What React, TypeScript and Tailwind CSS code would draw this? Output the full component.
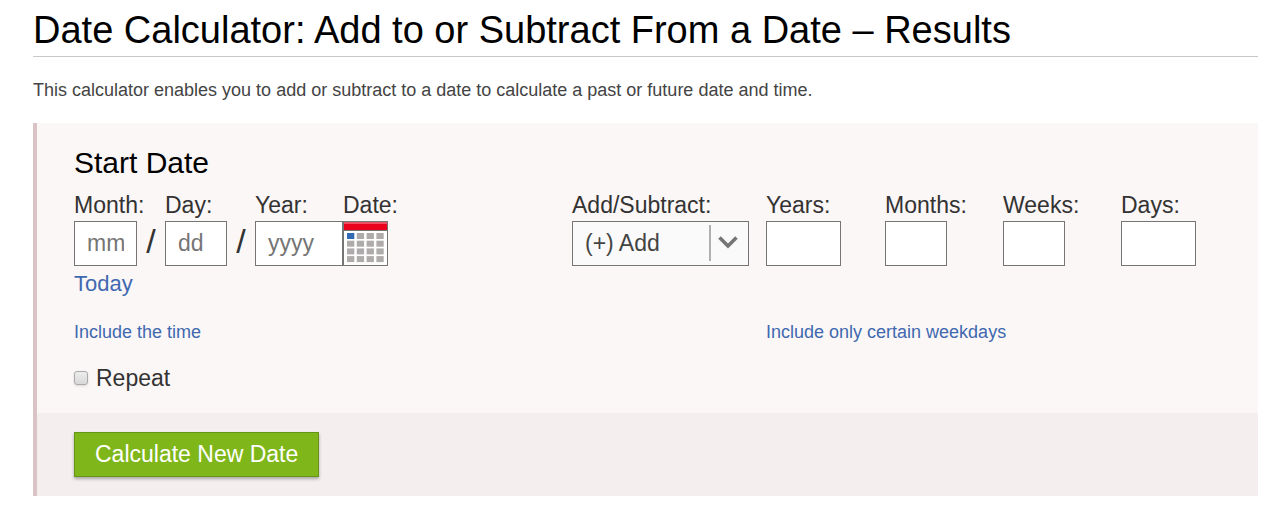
import { useState } from "react";

const fieldClass =
  "h-[45px] border border-[#757575] bg-white px-3 text-[23px] text-[#444] placeholder:text-[#757575] focus:outline-2 focus:outline-[#3a66ad]";
const labelClass = "text-[23px] leading-8 text-[#333]";
const linkClass = "text-[#3f68b0] hover:underline";
const slashClass = "w-7 text-center text-[34px] leading-10 text-[#333]";

const amounts = [
  { id: "years", label: "Years:", width: "w-[75px]" },
  { id: "months", label: "Months:", width: "w-[62px]" },
  { id: "weeks", label: "Weeks:", width: "w-[62px]" },
  { id: "days", label: "Days:", width: "w-[75px]" },
];

function CalendarIcon() {
  const cells = [0, 1, 2, 3];

  return (
    <svg width="43" height="43" viewBox="0 0 43 43" aria-hidden="true">
      <rect width="43" height="43" fill="#fff" />
      <rect width="43" height="8" fill="#e9001d" />
      <rect width="43" height="2" fill="#ea5260" />
      <rect y="8" width="43" height="1" fill="#757575" />
      {cells.map((row) =>
        cells.map((col) => (
          <rect
            key={`${row}-${col}`}
            x={3 + col * 9.8}
            y={11 + row * 7.7}
            width="7.3"
            height="6"
            fill={row === 0 && col === 0 ? "#3369b3" : "#afabab"}
          />
        ))
      )}
    </svg>
  );
}

function DateFields() {
  return (
    <div className="flex">
      <div className="flex flex-col">
        <label htmlFor="month" className={labelClass}>
          Month:
        </label>
        <div className="flex">
          <input id="month" className={`${fieldClass} w-[63px]`} placeholder="mm" />
          <span className={slashClass}>/</span>
        </div>
      </div>
      <div className="flex flex-col">
        <label htmlFor="day" className={labelClass}>
          Day:
        </label>
        <div className="flex">
          <input id="day" className={`${fieldClass} w-[62px]`} placeholder="dd" />
          <span className={slashClass}>/</span>
        </div>
      </div>
      <div className="flex flex-col">
        <label htmlFor="year" className={labelClass}>
          Year:
        </label>
        <input id="year" className={`${fieldClass} w-[88px]`} placeholder="yyyy" />
      </div>
      <div className="flex flex-col">
        <label htmlFor="calendar" className={labelClass}>
          Date:
        </label>
        <button id="calendar" type="button" className="h-[45px] w-[45px] border border-[#757575]">
          <CalendarIcon />
        </button>
      </div>
    </div>
  );
}

function App() {
  const [repeat, setRepeat] = useState(false);

  return (
    <div className="bg-white pt-2 pr-[26px] pl-[33px] font-['Liberation_Sans',Arial,sans-serif]">
      <h1 className="border-b border-[#c8c8c8] pb-1 text-[38px] leading-[44px] text-black">
        Date Calculator: Add to or Subtract From a Date – Results
      </h1>
      <p className="py-5 text-[18px] leading-[26px] text-[#444]">
        This calculator enables you to add or subtract to a date to calculate a past or future date and time.
      </p>
      <form className="border-l-4 border-[#dac3c6] bg-[#fbf7f6]" onSubmit={(e) => e.preventDefault()}>
        <div className="pt-5 pb-[19px] pl-[37px]">
          <h2 className="text-[30px] leading-10 text-black">Start Date</h2>
          <div className="mt-1.5 grid grid-cols-[498fr_194fr_119fr_118fr_118fr_137fr]">
            <div>
              <DateFields />
              <a href="#today" className={`${linkClass} text-[22px] leading-9`}>
                Today
              </a>
            </div>
            <div className="flex flex-col items-start">
              <label htmlFor="operation" className={labelClass}>
                Add/Subtract:
              </label>
              <div className="relative">
                <select
                  id="operation"
                  className="h-[45px] w-[177px] appearance-none border border-[#757575] bg-[#fafafa] px-3 text-[23px] text-[#444]"
                >
                  <option>(+) Add</option>
                  <option>(–) Subtract</option>
                </select>
                <svg
                  className="pointer-events-none absolute top-1 right-2"
                  width="32"
                  height="36"
                  viewBox="0 0 32 36"
                  fill="none"
                  aria-hidden="true"
                >
                  <path d="M1 0v36" stroke="#b0b0b0" strokeWidth="2" />
                  <path d="M10.500 12.500l8.500 8.500l8.500-8.500" stroke="#757575" strokeWidth="3.500" />
                </svg>
              </div>
            </div>
            {amounts.map((item) => (
              <div key={item.id} className="flex flex-col items-start">
                <label htmlFor={item.id} className={labelClass}>
                  {item.label}
                </label>
                <input id={item.id} className={`${fieldClass} ${item.width}`} />
              </div>
            ))}
            <a href="#time" className={`${linkClass} mt-4 text-[18px] leading-7`}>
              Include the time
            </a>
            <a href="#weekdays" className={`${linkClass} col-span-4 col-start-3 mt-4 text-[18px] leading-7`}>
              Include only certain weekdays
            </a>
          </div>
          <div className="mt-4 flex items-center gap-2">
            <input
              id="repeat"
              type="checkbox"
              checked={repeat}
              onChange={(e) => setRepeat(e.target.checked)}
              className="h-3.5 w-3.5 appearance-none rounded-[3px] border border-[#aaa] bg-linear-to-b from-[#ededed] to-[#d8d8d8] shadow-sm checked:from-[#3f68b0] checked:to-[#3f68b0]"
            />
            <label htmlFor="repeat" className={labelClass}>
              Repeat
            </label>
          </div>
        </div>
        <div className="bg-[#f4eeee] pt-[19px] pb-[19px] pl-[37px]">
          <button
            type="submit"
            className="h-[45px] border border-[#659416] bg-[#7fb71a] px-5 text-[23px] text-white shadow-[0_2px_3px_rgba(0,0,0,0.3)]"
          >
            Calculate New Date
          </button>
        </div>
      </form>
    </div>
  );
}

export default App;
